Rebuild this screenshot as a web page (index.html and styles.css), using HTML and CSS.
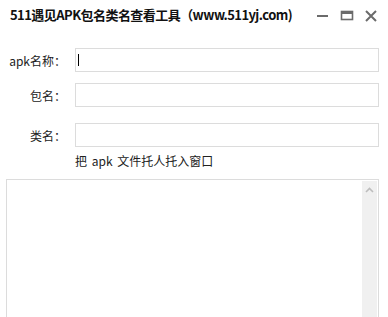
FILE: index.html
```html
<!DOCTYPE html>
<html>
<head>
<meta charset="utf-8">
<link rel="stylesheet" href="styles.css">
</head>
<body>
<div class="window">
  <div class="titlebar">
    <div class="title">511遇见APK包名类名查看工具（www.511yj.com)</div>
    <div class="controls">
      <svg class="ctl" width="14" height="14" viewBox="0 0 14 14"><rect x="1" y="6" width="11" height="2" fill="#6b6b6b"/></svg>
      <svg class="ctl" width="14" height="14" viewBox="0 0 14 14"><rect x="1.5" y="2.5" width="11" height="8" fill="none" stroke="#6b6b6b" stroke-width="1.6"/><rect x="1" y="2" width="12" height="3" fill="#6b6b6b"/></svg>
      <svg class="ctl" width="14" height="14" viewBox="0 0 14 14"><path d="M2 2 L12 12 M12 2 L2 12" stroke="#6b6b6b" stroke-width="2"/></svg>
    </div>
  </div>
  <div class="form">
    <div class="row r1">
      <label class="lbl">apk名称：</label>
      <div class="field"><span class="caret"></span></div>
    </div>
    <div class="row r2">
      <label class="lbl">包名：</label>
      <div class="field"></div>
    </div>
    <div class="row r3">
      <label class="lbl">类名：</label>
      <div class="field"></div>
    </div>
    <div class="hint">把 apk 文件托人托入窗口</div>
  </div>
  <div class="output">
    <div class="scrollbar">
      <svg width="15" height="14" viewBox="0 0 15 14"><path d="M4 9 L7.5 5.5 L11 9" fill="none" stroke="#bdbdbd" stroke-width="1.6"/></svg>
    </div>
  </div>
</div>
</body>
</html>
```

FILE: styles.css
```css
html, body {
  margin: 0;
  padding: 0;
  background: #fff;
  overflow: hidden;
}
body {
  width: 388px;
  height: 317px;
  font-family: "Noto Sans CJK SC", "Noto Sans", sans-serif;
  color: #222;
}
.window {
  display: flex;
  flex-direction: column;
  height: 317px;
}
.titlebar {
  display: flex;
  align-items: center;
  justify-content: space-between;
  height: 30px;
  padding-left: 10px;
  padding-right: 10px;
}
.title {
  font-size: 13px;
  font-weight: bold;
  color: #111;
  letter-spacing: -0.55px;
  margin-top: -1px;
}
.controls {
  display: flex;
  gap: 10px;
  align-items: center;
  margin-top: 1px;
}
.ctl { display: block; }
.form {
  display: flex;
  flex-direction: column;
}
.row {
  display: flex;
  align-items: center;
}
.r1 { margin-top: 18px; }
.r2 { margin-top: 11px; }
.r3 { margin-top: 16px; }
.lbl {
  width: 66px;
  text-align: right;
  font-size: 12px;
  color: #222;
  margin-right: 9px;
}
.field {
  width: 300px;
  height: 22px;
  border: 1px solid #dcdcdc;
  display: flex;
  align-items: center;
  padding-left: 2px;
}
.caret {
  width: 1px;
  height: 12px;
  background: #000;
}
.hint {
  margin-left: 75px;
  margin-top: 5px;
  font-size: 12px;
  line-height: 18px;
  color: #222;
  word-spacing: 2px;
}
.output {
  margin-top: 9px;
  margin-left: 6px;
  width: 370px;
  flex: 1;
  border: 1px solid #dcdcdc;
  border-bottom: none;
  display: flex;
  justify-content: flex-end;
  padding: 1px 1px 0 0;
}
.scrollbar {
  width: 15px;
  background: #f0f0f0;
  padding-top: 2px;
}
.scrollbar svg { display: block; }
```
